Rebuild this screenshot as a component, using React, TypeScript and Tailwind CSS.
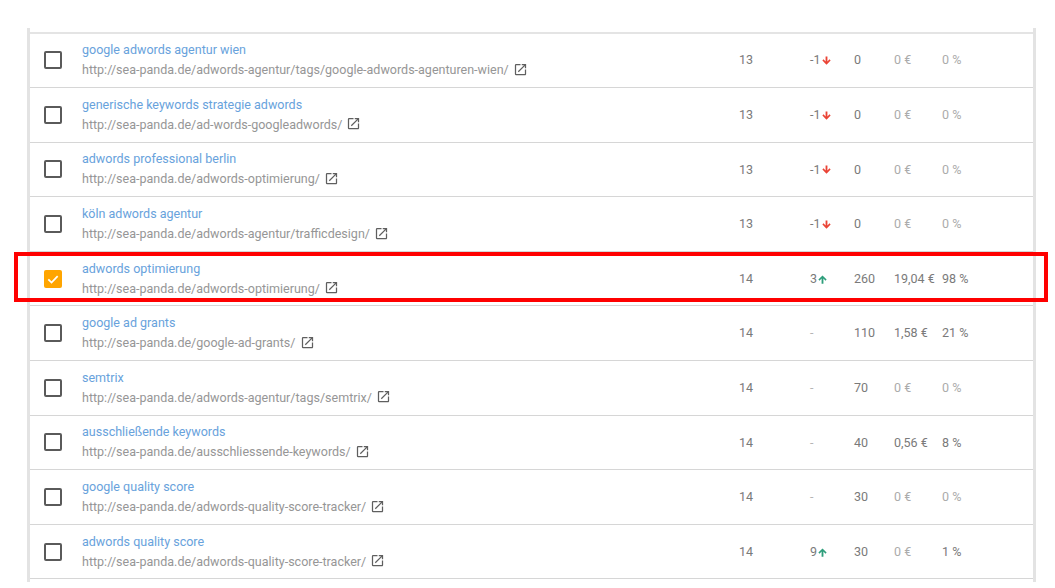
import React from 'react';

interface Row {
  keyword: string;
  url: string;
  pos: number;
  change: number | null;
  volume: number;
  value: string;
  share: string;
  checked?: boolean;
}

const rows: Row[] = [
  { keyword: 'google adwords agentur wien', url: 'http://sea-panda.de/adwords-agentur/tags/google-adwords-agenturen-wien/', pos: 13, change: -1, volume: 0, value: '0 €', share: '0 %' },
  { keyword: 'generische keywords strategie adwords', url: 'http://sea-panda.de/ad-words-googleadwords/', pos: 13, change: -1, volume: 0, value: '0 €', share: '0 %' },
  { keyword: 'adwords professional berlin', url: 'http://sea-panda.de/adwords-optimierung/', pos: 13, change: -1, volume: 0, value: '0 €', share: '0 %' },
  { keyword: 'köln adwords agentur', url: 'http://sea-panda.de/adwords-agentur/trafficdesign/', pos: 13, change: -1, volume: 0, value: '0 €', share: '0 %' },
  { keyword: 'adwords optimierung', url: 'http://sea-panda.de/adwords-optimierung/', pos: 14, change: 3, volume: 260, value: '19,04 €', share: '98 %', checked: true },
  { keyword: 'google ad grants', url: 'http://sea-panda.de/google-ad-grants/', pos: 14, change: null, volume: 110, value: '1,58 €', share: '21 %' },
  { keyword: 'semtrix', url: 'http://sea-panda.de/adwords-agentur/tags/semtrix/', pos: 14, change: null, volume: 70, value: '0 €', share: '0 %' },
  { keyword: 'ausschließende keywords', url: 'http://sea-panda.de/ausschliessende-keywords/', pos: 14, change: null, volume: 40, value: '0,56 €', share: '8 %' },
  { keyword: 'google quality score', url: 'http://sea-panda.de/adwords-quality-score-tracker/', pos: 14, change: null, volume: 30, value: '0 €', share: '0 %' },
  { keyword: 'adwords quality score', url: 'http://sea-panda.de/adwords-quality-score-tracker/', pos: 14, change: 9, volume: 30, value: '0 €', share: '1 %' },
];

const OpenIcon = () => (
  <svg viewBox="0 0 24 24" className="w-[15px] h-[15px] ml-[4px] -mt-[2px] fill-[#5f5f5f] shrink-0">
    <path d="M19 19H5V5h7V3H5a2 2 0 0 0-2 2v14a2 2 0 0 0 2 2h14c1.1 0 2-.9 2-2v-7h-2v7zM14 3v2h3.59l-9.83 9.83 1.41 1.41L19 6.41V10h2V3h-7z" />
  </svg>
);

const Arrow = ({ up }: { up: boolean }) => (
  <svg viewBox="0 0 24 24" className={`w-[11px] h-[11px] ${up ? 'fill-[#2e9e7b] rotate-180' : 'fill-[#ea4335]'}`}>
    <path d="M21 12l-2.500-2.500L14 14V3h-4v11L5.500 9.500 3 12l9 9 9-9z" />
  </svg>
);

const Checkbox = ({ checked }: { checked?: boolean }) =>
  checked ? (
    <div className="w-[18px] h-[18px] rounded-[2px] bg-[#ffa500] flex items-center justify-center">
      <svg viewBox="0 0 24 24" className="w-[14px] h-[14px] fill-none stroke-white stroke-[3]">
        <path d="M4 12.500l5.500 5.500L20 7" />
      </svg>
    </div>
  ) : (
    <div className="w-[18px] h-[18px] rounded-[2px] border-2 border-[#5a5a5a]" />
  );

const App: React.FC = () => {
  return (
    <div className="relative w-[1055px] h-[588px] overflow-hidden bg-white font-['Roboto',sans-serif] text-[12.52px]">
      <div className="ml-[27px] mt-[28px] w-[1009px] h-[554px] border-x-[3px] border-[#e3e3e3] pt-[3.5px]">
        <div className="border-t-2 border-[#e4e4e4]">
          {rows.map((row) => (
            <div key={row.keyword} className="flex items-center h-[54.6px] border-b border-[#d6d6d6] text-[#7a7a7a]">
              <div className="w-[52px] pl-[14px]">
                <Checkbox checked={row.checked} />
              </div>
              <div className="w-[657px] leading-[20px]">
                <div className="text-[#68a2dc]">{row.keyword}</div>
                <div className="flex items-center text-[#969696]">
                  {row.url}
                  <OpenIcon />
                </div>
              </div>
              <div className="flex items-center pt-[1px]">
                <div className="w-[71px]">{row.pos}</div>
                <div className="w-[44px] flex items-center">
                  {row.change === null ? (
                    <span className="text-[#b5b5b5]">-</span>
                  ) : (
                    <>
                      <span>{row.change}</span>
                      <Arrow up={row.change > 0} />
                    </>
                  )}
                </div>
                <div className="w-[40px]">{row.volume}</div>
                <div className={`w-[48px] ${row.value === '0 €' ? 'text-[#ababab]' : ''}`}>{row.value}</div>
                <div className={row.share === '0 %' ? 'text-[#ababab]' : ''}>{row.share}</div>
              </div>
            </div>
          ))}
        </div>
      </div>
      <div className="absolute left-[14px] top-[252px] w-[1034px] h-[50px] border-[4px] border-[#ff0000]" />
    </div>
  );
};

export default App;
